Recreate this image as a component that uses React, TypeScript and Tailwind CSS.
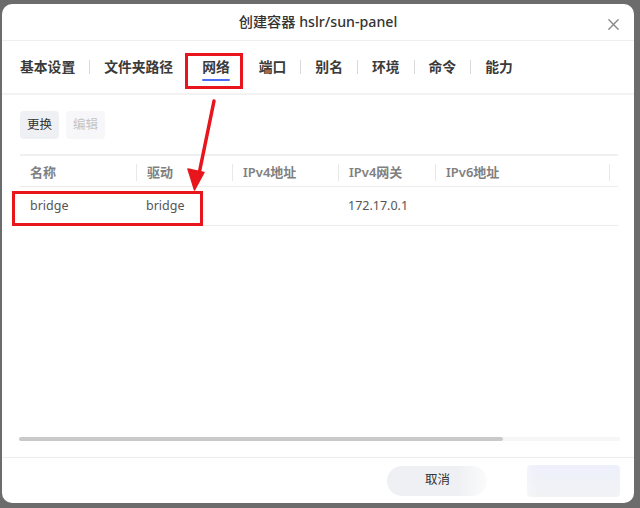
import React from "react";

const font = { fontFamily: '"Noto Sans", "Noto Sans CJK SC", sans-serif' };

const tabs = ["基本设置", "文件夹路径", "网络", "端口", "别名", "环境", "命令", "能力"];
const active = 2;

export default function App() {
  return (
    <div className="w-[640px] h-[508px] bg-[#6c6c6c] pt-[4px] pl-[2px] pr-[6px] pb-[5px] overflow-hidden" style={font}>
      <div className="relative w-full h-full bg-white rounded-[10px] flex flex-col overflow-hidden">
        {/* header */}
        <div className="relative h-[37px] shrink-0 border-b border-[#efefef] flex items-center justify-center">
          <span className="text-[14.2px] text-[#333] font-medium">创建容器 hslr/sun-panel</span>
          <svg className="absolute right-[14px] top-[14px]" width="13" height="13" viewBox="0 0 14 14">
            <path d="M2 2 L12 12 M12 2 L2 12" stroke="#8a8a8a" strokeWidth="1.5" strokeLinecap="round" />
          </svg>
        </div>
        {/* tabs */}
        <div className="h-[54px] shrink-0 border-b-2 border-[#f2f2f2] flex items-center pl-[18px]">
          {tabs.map((t, i) => (
            <React.Fragment key={t}>
              {i > 0 && (
                <span
                  className={
                    i === active || i === active + 1
                      ? "w-px h-[14px] mx-[14px] bg-transparent"
                      : "w-px h-[14px] mx-[14px] bg-[#d9d9d9]"
                  }
                />
              )}
              <span className="relative text-[13.8px] font-semibold text-[#3a3a3a] leading-none">
                {t}
                {i === active && (
                  <span className="absolute left-0 right-0 top-[19px] h-[2px] bg-[#4a6cf7] rounded-full" />
                )}
              </span>
            </React.Fragment>
          ))}
        </div>
        {/* content */}
        <div className="flex-1 flex flex-col pl-[18px] pr-[16px]">
          <div className="flex gap-[7px] mt-[16px]">
            <div className="w-[39px] h-[28px] rounded-[4px] bg-[#eff0f3] flex items-center justify-center text-[12.5px] text-[#333]">更换</div>
            <div className="w-[39px] h-[28px] rounded-[4px] bg-[#f7f7f9] flex items-center justify-center text-[12.5px] text-[#c4c4c4]">编辑</div>
          </div>
          <div className="mt-[15px] border-t-2 border-[#f0f0f0]">
            <div className="grid grid-cols-[116px_96px_106px_97px_174px_9px] h-[31px] pt-[3px] items-center border-b border-[#ececec] text-[13px] font-semibold text-[#808080]">
              <div className="pl-[10px]">名称</div>
              <div className="pl-[10px] border-l border-[#e8e8e8] h-[17px] flex items-center">驱动</div>
              <div className="pl-[10px] border-l border-[#e8e8e8] h-[17px] flex items-center">IPv4地址</div>
              <div className="pl-[10px] border-l border-[#e8e8e8] h-[17px] flex items-center">IPv4网关</div>
              <div className="pl-[10px] border-l border-[#e8e8e8] h-[17px] flex items-center">IPv6地址</div>
              <div className="border-l border-[#e8e8e8] h-[17px]" />
            </div>
            <div className="grid grid-cols-[116px_96px_106px_97px_174px_9px] h-[39px] pt-[1px] items-center border-b border-[#ececec] text-[12.5px] text-[#555]">
              <div className="pl-[10px]">bridge</div>
              <div className="pl-[10px]">bridge</div>
              <div className="pl-[10px]"></div>
              <div className="pl-[10px]">172.17.0.1</div>
              <div />
              <div />
            </div>
          </div>
          <div className="flex-1" />
          <div className="h-[4px] rounded-full bg-[#f6f6f6] mb-[16px] ml-[-1px] mr-[-2px] flex">
            <div className="w-[484px] h-full rounded-full bg-[#c9c9c9]" />
          </div>
        </div>
        {/* footer */}
        <div className="h-[46px] shrink-0 border-t border-[#ececec] flex items-center justify-end pr-[14px] gap-[40px] relative">
          <div className="w-[100px] h-[30px] rounded-full bg-[#eff0f3] flex items-center justify-start pl-[38px] text-[12.5px] text-[#333]">取消</div>
          <div className="w-[93px] h-[32px] rounded-[4px] bg-gradient-to-b from-[#edf0fb] to-[#f3f3f5]" />
          <div className="absolute left-[455px] top-0 w-[80px] h-full bg-gradient-to-r from-transparent via-white to-transparent" />
        </div>

        {/* annotations */}
        <div className="absolute left-[183px] top-[49px] w-[58px] h-[36px] border-[3px] border-[#e8151d]" />
        <div className="absolute left-[10px] top-[187px] w-[191px] h-[35px] border-[3px] border-[#e8151d]" />
        <svg className="absolute left-0 top-0 pointer-events-none" width="632" height="499">
          <path d="M212 97 L197 170" stroke="#e8151d" strokeWidth="3.5" strokeLinecap="round" />
          <path d="M192.5 186 L186 165 L202 168.5 Z" fill="#e8151d" stroke="#e8151d" strokeWidth="1.5" strokeLinejoin="round" />
        </svg>
      </div>
    </div>
  );
}
